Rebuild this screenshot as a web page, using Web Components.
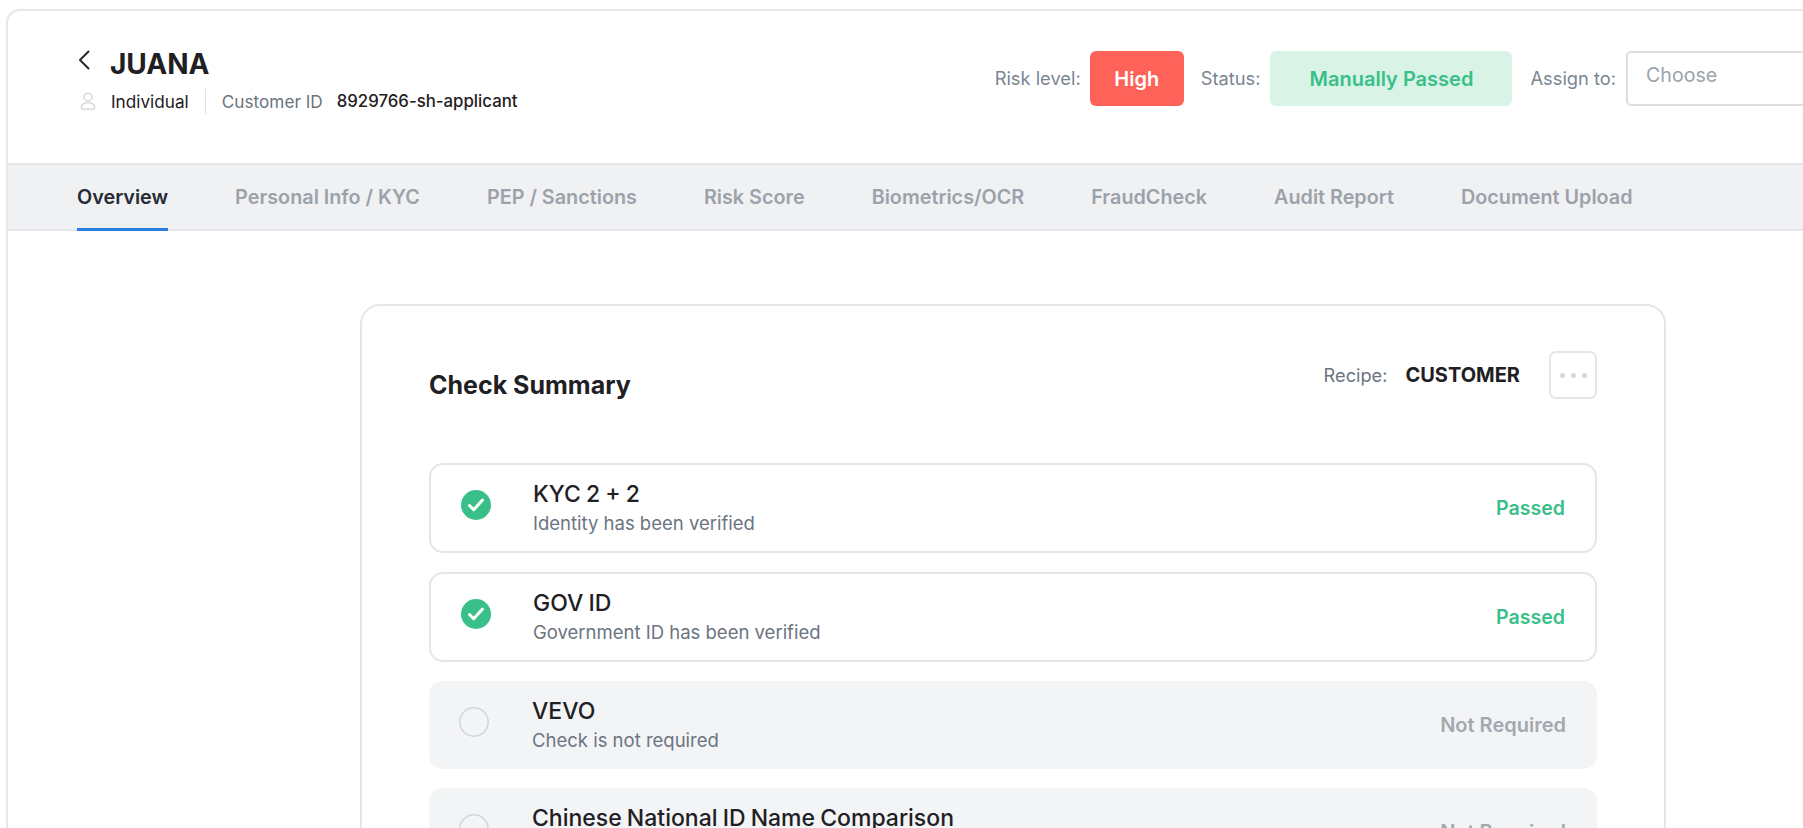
<!DOCTYPE html>
<html>
<head>
<meta charset="utf-8">
<title>JUANA</title>
<style>
  html, body { margin: 0; height: 100%; overflow: hidden; background: #fff; }
  body { padding: 9px 0 0 6px; box-sizing: border-box; font-family: Inter, Lato, sans-serif; color: #1f2023; }
</style>
</head>
<body>
<app-frame>
  <record-header name="JUANA" kind="Individual" customer="8929766-sh-applicant"></record-header>
  <tab-bar>
    <tab-item active>Overview</tab-item>
    <tab-item>Personal Info / KYC</tab-item>
    <tab-item>PEP / Sanctions</tab-item>
    <tab-item>Risk Score</tab-item>
    <tab-item>Biometrics/OCR</tab-item>
    <tab-item>FraudCheck</tab-item>
    <tab-item>Audit Report</tab-item>
    <tab-item>Document Upload</tab-item>
  </tab-bar>
  <check-summary recipe="CUSTOMER">
    <check-row state="passed" title="KYC 2 + 2" note="Identity has been verified"></check-row>
    <check-row state="passed" title="GOV ID" note="Government ID has been verified"></check-row>
    <check-row state="off" title="VEVO" note="Check is not required"></check-row>
    <check-row state="off" title="Chinese National ID Name Comparison" note="Check is not required"></check-row>
  </check-summary>
</app-frame>

<script>
class AppFrame extends HTMLElement {
  constructor() {
    super();
    this.attachShadow({ mode: 'open' });
    this.shadowRoot.innerHTML = `
      <style>
        :host {
          display: block;
          width: 2014px;
          min-height: 1000px;
          border: 2px solid #e6e7eb;
          border-radius: 14px 14px 0 0;
          box-sizing: border-box;
          background: #fff;
        }
      </style>
      <slot></slot>
    `;
  }
}

class RecordHeader extends HTMLElement {
  constructor() {
    super();
    this.attachShadow({ mode: 'open' });
    this.shadowRoot.innerHTML = `
      <style>
        :host {
          display: flex;
          align-items: flex-start;
          height: 152px;
          box-sizing: border-box;
          padding: 40px 71px 0 71px;
        }
        .left { flex: 1; margin-top: -5px; }
        .name-row { display: flex; align-items: flex-start; gap: 20px; height: 32px; }
        .name-row svg { display: block; margin: 4px 0 0 -1px; }
        h1 { margin: 0; padding-top: 2px; font-size: 28px; line-height: 32px; font-weight: 700; color: #1f2023; }
        .meta { display: flex; align-items: center; height: 26px; margin-top: 10px; font-size: 17.2px; }
        .meta svg { display: block; margin: 0 15px 0 1px; }
        .kind { color: #1f2023; }
        .sep { width: 1px; height: 25px; background: #dfe1e5; margin: 0 16px; }
        .label { color: #6b7480; }
        .cust { margin-left: 14px; font-size: 16.8px; color: #1f2023; font-weight: 500; }
        .right { display: flex; align-items: center; font-size: 18.3px; color: #7b8591; }
        .right > span:not(.pill) { position: relative; top: -1px; }
        .pill { display: flex; align-items: center; justify-content: center; height: 55px; box-sizing: border-box; border-radius: 6px; font-size: 20px; font-weight: 600; }
        .high { width: 94px; background: #ff6259; color: #fff; margin: 0 17px 0 9px; }
        .pass { width: 242px; background: #d9f3e7; color: #39bf88; margin: 0 18px 0 10px; }
        .choose { width: 321px; height: 55px; margin-left: 10px; box-sizing: border-box; border: 2px solid #dcdee3; border-radius: 5px; padding: 10px 18px; font-size: 19.6px; line-height: 24px; color: #9ca3ab; }
      </style>
      <div class="left">
        <div class="name-row">
          <svg width="12" height="20" viewBox="0 0 12 20" fill="none" stroke="#25272b" stroke-width="2" stroke-linecap="round" stroke-linejoin="round"><path d="M10.500 1.500 2 10l8.500 8.500"/></svg>
          <h1></h1>
        </div>
        <div class="meta">
          <svg width="16" height="18" viewBox="0 0 16 18" fill="none" stroke="#d0d3d8" stroke-width="1.300"><circle cx="8" cy="5" r="3.900"/><path d="M1.500 16.200c-.7-3.200 1.700-5.500 6.500-5.500s7.200 2.300 6.500 5.500c-.2.700-.7 1-1.400 1H2.900c-.7 0-1.200-.3-1.400-1z"/></svg>
          <span class="kind"></span>
          <span class="sep"></span>
          <span class="label">Customer ID</span>
          <span class="cust"></span>
        </div>
      </div>
      <div class="right">
        <span>Risk level:</span>
        <span class="pill high">High</span>
        <span>Status:</span>
        <span class="pill pass">Manually Passed</span>
        <span>Assign to:</span>
        <div class="choose">Choose</div>
      </div>
    `;
    this.shadowRoot.querySelector('h1').textContent = this.getAttribute('name');
    this.shadowRoot.querySelector('.kind').textContent = this.getAttribute('kind');
    this.shadowRoot.querySelector('.cust').textContent = this.getAttribute('customer');
  }
}

class TabBar extends HTMLElement {
  constructor() {
    super();
    this.attachShadow({ mode: 'open' });
    this.shadowRoot.innerHTML = `
      <style>
        :host {
          display: flex;
          gap: 67px;
          height: 68px;
          box-sizing: border-box;
          padding: 0 69px;
          background: #f0f1f3;
          border-top: 2px solid #e4e6e9;
          border-bottom: 2px solid #e4e6e9;
        }
      </style>
      <slot></slot>
    `;
  }
}

class TabItem extends HTMLElement {
  constructor() {
    super();
    this.attachShadow({ mode: 'open' });
    this.shadowRoot.innerHTML = `
      <style>
        :host {
          display: block;
          box-sizing: border-box;
          height: 66px;
          padding-top: 19px;
          font-size: 19.8px;
          line-height: 26px;
          font-weight: 600;
          color: #9ca2aa;
          border-bottom: 3px solid transparent;
        }
        :host([active]) { color: #262b33; border-bottom-color: #2a7de1; }
      </style>
      <slot></slot>
    `;
  }
}

class CheckSummary extends HTMLElement {
  constructor() {
    super();
    this.attachShadow({ mode: 'open' });
    this.shadowRoot.innerHTML = `
      <style>
        :host {
          display: block;
          width: 1306px;
          margin: 73px auto 0;
          box-sizing: border-box;
          padding: 45px 67px 40px 67px;
          border: 2px solid #e4e6e9;
          border-radius: 20px;
        }
        .top { display: flex; align-items: center; height: 48px; margin-bottom: 64px; }
        h2 { flex: 1; margin: 0; font-size: 25px; line-height: 32px; font-weight: 700; color: #1f2023; position: relative; top: 10px; }
        .recipe { font-size: 18.2px; color: #6b7480; margin-right: 18px; }
        .value { font-size: 20px; font-weight: 700; color: #1f2023; margin-right: 29px; }
        .more { display: flex; align-items: center; justify-content: center; gap: 6px; width: 48px; height: 48px; box-sizing: border-box; border: 2px solid #e4e6e9; border-radius: 7px; }
        .more i { width: 5px; height: 5px; border-radius: 50%; background: #d5d8dd; }
        .rows { display: flex; flex-direction: column; gap: 19px; }
      </style>
      <div class="top">
        <h2>Check Summary</h2>
        <span class="recipe">Recipe:</span>
        <span class="value">${this.getAttribute('recipe')}</span>
        <div class="more"><i></i><i></i><i></i></div>
      </div>
      <div class="rows"><slot></slot></div>
    `;
  }
}

class CheckRow extends HTMLElement {
  constructor() {
    super();
    const passed = this.getAttribute('state') === 'passed';
    this.attachShadow({ mode: 'open' });
    this.shadowRoot.innerHTML = `
      <style>
        :host {
          display: flex;
          align-items: center;
          height: 90px;
          box-sizing: border-box;
          padding: 0 30px 0 30px;
          border: 2px solid #e4e6e9;
          border-radius: 14px;
        }
        :host([state="off"]) { height: 88px; border: 0; background: #f3f4f6; padding: 0 31px 0 30px; }
        svg { display: block; flex: none; width: 30px; height: 30px; margin: 0 42px 6px 0; }
        :host([state="off"]) svg { margin: 0 43px 6px 0; }
        .text { flex: 1; display: flex; flex-direction: column; }
        .title { font-size: 23px; line-height: 28px; font-weight: 500; word-spacing: -1px; color: #1f2023; }
        .note { font-size: 18.5px; line-height: 26px; margin-top: 2px; color: #6b7480; }
        .state { font-size: 19.6px; font-weight: 600; color: #39bf88; }
        :host([state="off"]) .state { font-size: 20px; color: #a3a8af; }
      </style>
      ${passed
        ? `<svg viewBox="0 0 30 30"><circle cx="15" cy="15" r="15" fill="#39bf88"/><path d="M8.500 15.500l4.200 4.300 8.800-9.800" fill="none" stroke="#fff" stroke-width="3" stroke-linecap="round" stroke-linejoin="round"/></svg>`
        : `<svg viewBox="0 0 30 30"><circle cx="15" cy="15" r="14.200" fill="none" stroke="#d2d4d8" stroke-width="1.500"/></svg>`}
      <div class="text">
        <div class="title">${this.getAttribute('title')}</div>
        <div class="note">${this.getAttribute('note')}</div>
      </div>
      <div class="state">${passed ? 'Passed' : 'Not Required'}</div>
    `;
  }
}

customElements.define('app-frame', AppFrame);
customElements.define('record-header', RecordHeader);
customElements.define('tab-bar', TabBar);
customElements.define('tab-item', TabItem);
customElements.define('check-summary', CheckSummary);
customElements.define('check-row', CheckRow);
</script>
</body>
</html>
